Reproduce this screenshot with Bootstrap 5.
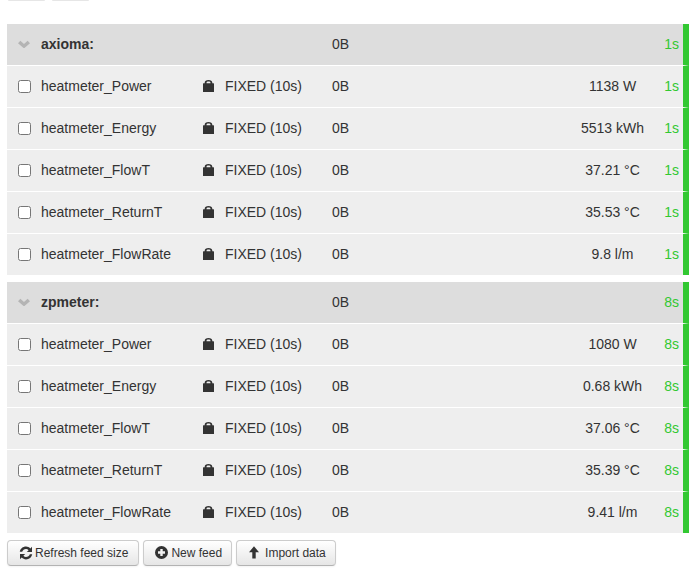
<!DOCTYPE html>
<html lang="en">
<head>
<meta charset="utf-8">
<title>Feeds</title>
<link rel="stylesheet" href="https://cdn.jsdelivr.net/npm/bootstrap@5.3.0/dist/css/bootstrap.min.css">
<style>
html,body{height:580px;overflow:hidden}
body{background:#fff;color:#333;font:14px/20px "Liberation Sans",Arial,sans-serif}
.page-wrap{padding:0 11px 0 7px}
.top-stubs{height:24px;padding-left:1px;gap:7px}
.top-stubs span{display:block;width:37px;height:1px;background:#e6e6e6;border-radius:0 0 3px 3px}
.icon-defs{display:none}
.feed-group{margin-bottom:7px}
.feed-row{height:42px;background:#eee;border-right:6px solid rgb(50,200,50);border-bottom:1px solid #fff;padding-bottom:1px}
.feed-row:last-child{height:41px;border-bottom:0}
.feed-head{background:#ddd;font-weight:700}
.feed-head .c-size,.feed-head .c-age{font-weight:400}
.c-check{width:34px;padding-left:11px;flex:none}
.c-check svg{display:block}
.c-check input{display:block;width:13px;height:13px;margin:0}
.c-name{width:162px;flex:none}
.c-lock{width:22px;flex:none}
.c-lock svg{display:block}
.c-engine{width:107px;flex:none}
.c-size{width:60px;flex:none}
.c-value{width:265px;padding-left:176px;flex:none;text-align:center}
.c-age{width:26px;flex:none;padding-right:4px;text-align:right;color:rgb(50,200,50)}
.tool-row{gap:4px;margin-top:7px}
.tool-btn{font-size:12px;line-height:18px;padding:3px 10px 4px 11px;height:26px;color:#333;background:linear-gradient(#fff,#e6e6e6);border:1px solid #ccc;border-bottom-color:#b3b3b3;border-radius:4px;box-shadow:0 1px 2px rgba(0,0,0,.05);gap:2px}
.tool-btn:not(:first-child){padding-right:9px;gap:3px}
.tool-btn svg{flex:none}
</style>
</head>
<body>
<svg class="icon-defs" aria-hidden="true">
  <symbol id="ic-chev" viewBox="0 0 12 8"><path fill="#b4b4b4" d="M0 3.200 2.400.8 6 4 9.600.8 12 3.200 6 8.400z"/></symbol>
  <symbol id="ic-lock" viewBox="0 0 11 12"><path fill="#333" fill-rule="evenodd" d="M.5 3.300h1.200V2.800C1.700 1 3.200 0 5.500 0s3.800 1 3.800 2.800v.5h1.200c.3 0 .5.200.5.500V12H0V3.800c0-.3.200-.5.500-.5zM3.500 3.300h4V2.900c0-.9-.8-1.300-2-1.300s-2 .4-2 1.300z"/></symbol>
  <symbol id="ic-refresh" viewBox="0 0 14 14"><path fill="#333" d="M7 .6c1.700 0 3.200.7 4.300 1.800L13 .8V6H7.800l1.800-1.800C8.900 3.400 8 3 7 3 5.200 3 3.700 4.100 3.200 5.800H.8C1.300 2.800 3.900.6 7 .6zM1 8h5.200L4.400 9.800C5.100 10.600 6 11 7 11c1.800 0 3.300-1.100 3.800-2.800h2.400c-.5 3-3.100 5.200-6.200 5.200-1.700 0-3.200-.7-4.300-1.800L1 13.200z"/></symbol>
  <symbol id="ic-plus" viewBox="0 0 13 13"><path fill="#333" fill-rule="evenodd" d="M6.500 0a6.500 6.500 0 1 1 0 13 6.500 6.500 0 0 1 0-13zM5.300 3v2.300H3v2.400h2.300V10h2.400V7.700H10V5.300H7.700V3z"/></symbol>
  <symbol id="ic-up" viewBox="0 0 14 13"><path fill="#333" d="M6 .3 11 6.300H7.700V12.500H4.300V6.300H1z"/></symbol>
</svg>
<div class="page-wrap">
  <div class="top-stubs d-flex"><span></span><span></span></div>

  <div class="feed-group">
    <div class="feed-row feed-head d-flex align-items-center">
      <div class="c-check"><svg width="12" height="8"><use href="#ic-chev"/></svg></div>
      <div class="c-name">axioma:</div><div class="c-lock"></div><div class="c-engine"></div><div class="c-size">0B</div><div class="c-value"></div><div class="c-age">1s</div>
    </div>
    <div class="feed-row d-flex align-items-center"><div class="c-check"><input type="checkbox"></div><div class="c-name">heatmeter_Power</div><div class="c-lock"><svg width="11" height="12"><use href="#ic-lock"/></svg></div><div class="c-engine">FIXED (10s)</div><div class="c-size">0B</div><div class="c-value">1138 W</div><div class="c-age">1s</div></div>
    <div class="feed-row d-flex align-items-center"><div class="c-check"><input type="checkbox"></div><div class="c-name">heatmeter_Energy</div><div class="c-lock"><svg width="11" height="12"><use href="#ic-lock"/></svg></div><div class="c-engine">FIXED (10s)</div><div class="c-size">0B</div><div class="c-value">5513 kWh</div><div class="c-age">1s</div></div>
    <div class="feed-row d-flex align-items-center"><div class="c-check"><input type="checkbox"></div><div class="c-name">heatmeter_FlowT</div><div class="c-lock"><svg width="11" height="12"><use href="#ic-lock"/></svg></div><div class="c-engine">FIXED (10s)</div><div class="c-size">0B</div><div class="c-value">37.21 °C</div><div class="c-age">1s</div></div>
    <div class="feed-row d-flex align-items-center"><div class="c-check"><input type="checkbox"></div><div class="c-name">heatmeter_ReturnT</div><div class="c-lock"><svg width="11" height="12"><use href="#ic-lock"/></svg></div><div class="c-engine">FIXED (10s)</div><div class="c-size">0B</div><div class="c-value">35.53 °C</div><div class="c-age">1s</div></div>
    <div class="feed-row d-flex align-items-center"><div class="c-check"><input type="checkbox"></div><div class="c-name">heatmeter_FlowRate</div><div class="c-lock"><svg width="11" height="12"><use href="#ic-lock"/></svg></div><div class="c-engine">FIXED (10s)</div><div class="c-size">0B</div><div class="c-value">9.8 l/m</div><div class="c-age">1s</div></div>
  </div>

  <div class="feed-group mb-0">
    <div class="feed-row feed-head d-flex align-items-center">
      <div class="c-check"><svg width="12" height="8"><use href="#ic-chev"/></svg></div>
      <div class="c-name">zpmeter:</div><div class="c-lock"></div><div class="c-engine"></div><div class="c-size">0B</div><div class="c-value"></div><div class="c-age">8s</div>
    </div>
    <div class="feed-row d-flex align-items-center"><div class="c-check"><input type="checkbox"></div><div class="c-name">heatmeter_Power</div><div class="c-lock"><svg width="11" height="12"><use href="#ic-lock"/></svg></div><div class="c-engine">FIXED (10s)</div><div class="c-size">0B</div><div class="c-value">1080 W</div><div class="c-age">8s</div></div>
    <div class="feed-row d-flex align-items-center"><div class="c-check"><input type="checkbox"></div><div class="c-name">heatmeter_Energy</div><div class="c-lock"><svg width="11" height="12"><use href="#ic-lock"/></svg></div><div class="c-engine">FIXED (10s)</div><div class="c-size">0B</div><div class="c-value">0.68 kWh</div><div class="c-age">8s</div></div>
    <div class="feed-row d-flex align-items-center"><div class="c-check"><input type="checkbox"></div><div class="c-name">heatmeter_FlowT</div><div class="c-lock"><svg width="11" height="12"><use href="#ic-lock"/></svg></div><div class="c-engine">FIXED (10s)</div><div class="c-size">0B</div><div class="c-value">37.06 °C</div><div class="c-age">8s</div></div>
    <div class="feed-row d-flex align-items-center"><div class="c-check"><input type="checkbox"></div><div class="c-name">heatmeter_ReturnT</div><div class="c-lock"><svg width="11" height="12"><use href="#ic-lock"/></svg></div><div class="c-engine">FIXED (10s)</div><div class="c-size">0B</div><div class="c-value">35.39 °C</div><div class="c-age">8s</div></div>
    <div class="feed-row d-flex align-items-center"><div class="c-check"><input type="checkbox"></div><div class="c-name">heatmeter_FlowRate</div><div class="c-lock"><svg width="11" height="12"><use href="#ic-lock"/></svg></div><div class="c-engine">FIXED (10s)</div><div class="c-size">0B</div><div class="c-value">9.41 l/m</div><div class="c-age">8s</div></div>
  </div>

  <div class="tool-row d-flex">
    <button type="button" class="btn tool-btn d-inline-flex align-items-center"><svg width="14" height="14"><use href="#ic-refresh"/></svg>Refresh feed size</button>
    <button type="button" class="btn tool-btn d-inline-flex align-items-center"><svg width="13" height="13"><use href="#ic-plus"/></svg>New feed</button>
    <button type="button" class="btn tool-btn d-inline-flex align-items-center"><svg width="14" height="13"><use href="#ic-up"/></svg>Import data</button>
  </div>
</div>
</body>
</html>
